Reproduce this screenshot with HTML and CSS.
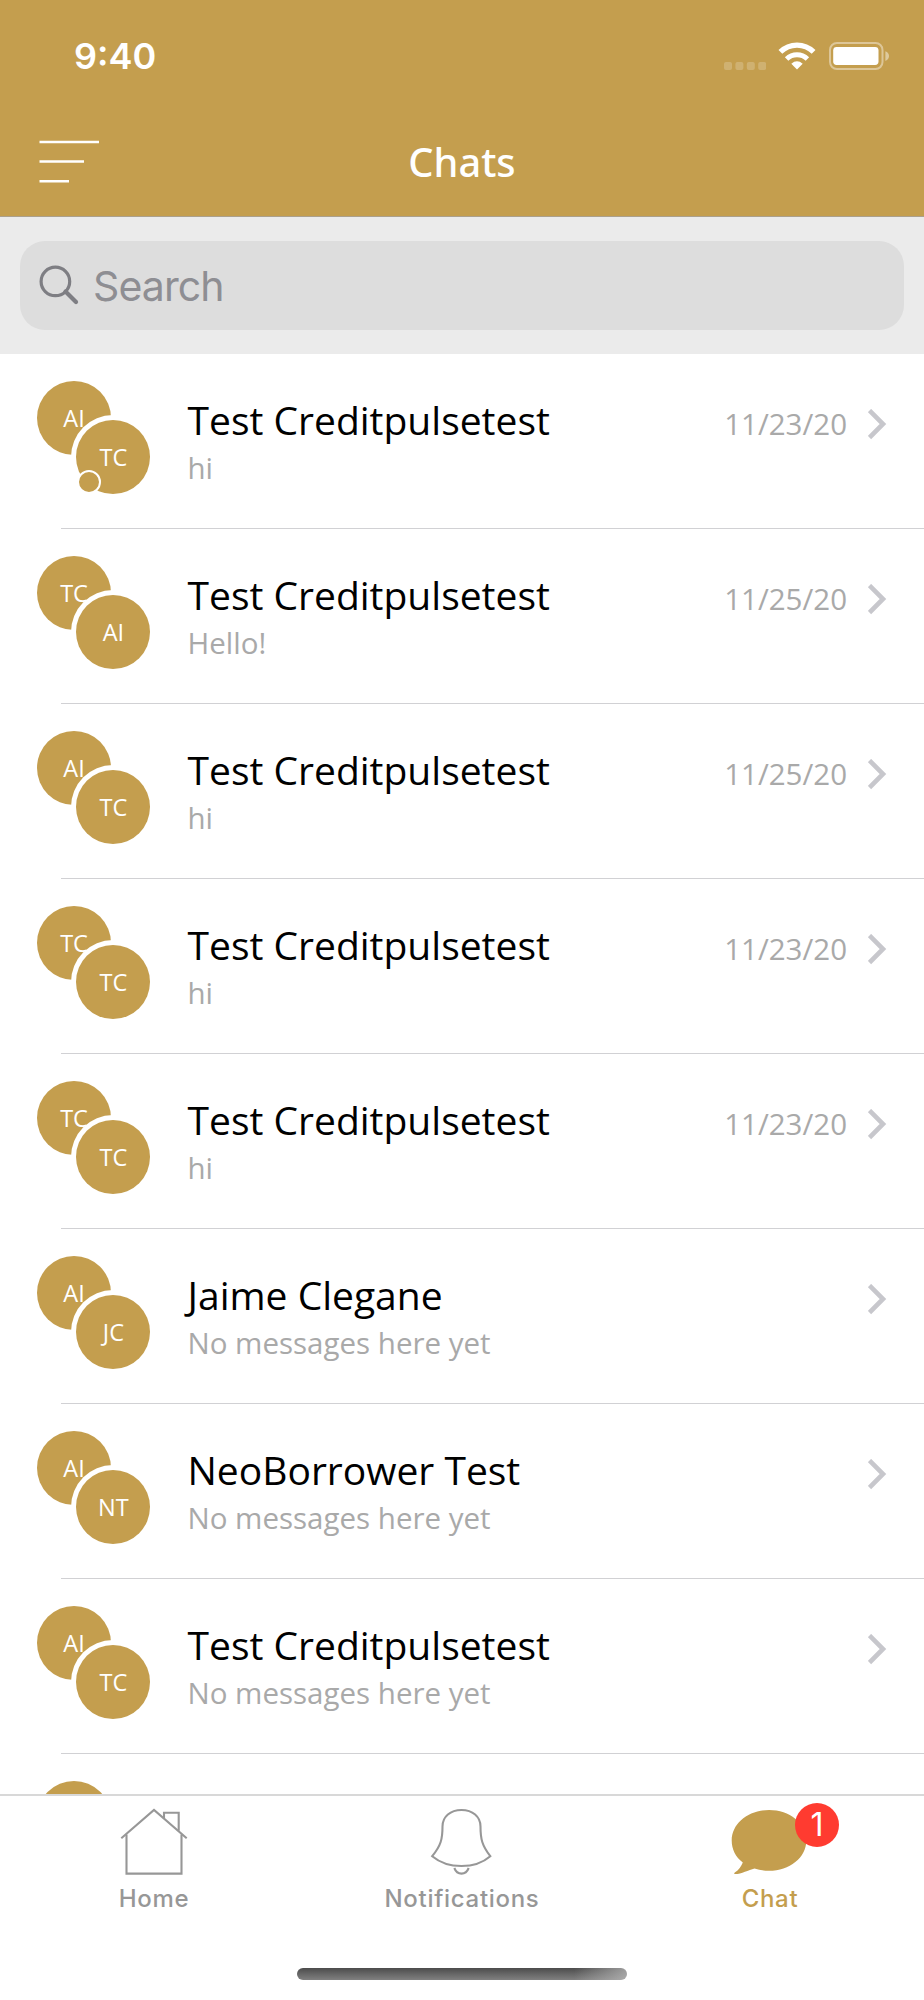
FILE: index.html
```html
<!DOCTYPE html>
<html lang="en">
<head>
<meta charset="utf-8">
<title>Chats</title>
<link rel="stylesheet" href="styles.css">
</head>
<body>
<div class="app">
  <header class="header">
    <div class="status-bar">
      <span class="time">9:40</span>
      <div class="status-icons">
        <svg class="signal" width="42" height="8" viewBox="0 0 42 8"><g fill="#fff" fill-opacity=".2"><rect x="0" width="8" height="8" rx="2"/><rect x="11.4" width="8" height="8" rx="2"/><rect x="22.8" width="8" height="8" rx="2"/><rect x="34.2" width="8" height="8" rx="2"/></g></svg>
        <svg class="wifi" width="38" height="28" viewBox="0 0 38 28"><g fill="none" stroke="#fff" stroke-width="5.4"><path d="M2.4 9.9A23.7 23.7 0 0 1 35.6 9.9"/><path d="M8.6 17A15 15 0 0 1 29.4 17" stroke-width="5"/></g><path d="M19 27.4L13.3 21.7Q19 16.9 24.7 21.7Z" fill="#fff"/></svg>
        <svg class="battery" width="61" height="28" viewBox="0 0 61 28"><rect x="1" y="1" width="52.5" height="26" rx="7" fill="none" stroke="#fff" stroke-opacity=".42" stroke-width="2"/><rect x="4.2" y="5" width="45.3" height="18" rx="3.4" fill="#fff"/><path d="M56.4 9.2q3.6 1.4 3.6 4.9t-3.6 4.9z" fill="#fff" fill-opacity=".45"/></svg>
      </div>
    </div>
    <div class="nav-bar">
      <svg class="menu" width="60" height="44" viewBox="0 0 60 44"><path d="M.5 2H60M.5 21.600H45M.5 41.300H30" stroke="#fff" stroke-width="2.5"/></svg>
      <h1 class="title">Chats</h1>
    </div>
  </header>
  <div class="search-bar">
    <div class="search-field">
      <svg class="search-icon" width="40" height="40" viewBox="0 0 40 40" fill="none" stroke="#7e7e83" stroke-width="3.2"><circle cx="16.4" cy="16.4" r="14.3"/><path d="M26.5 26.5L37 37" stroke-width="4.2" stroke-linecap="round"/></svg>
      <span class="placeholder">Search</span>
    </div>
  </div>
  <main class="chat-list" id="chat-list"></main>
  <footer class="tab-bar">
    <nav class="tabs">
      <div class="tab">
        <svg class="tab-icon" width="68" height="68" viewBox="0 0 68 68" fill="none" stroke="#979797" stroke-width="2.1"><path d="M1.3 30.3L34 2L66.7 30.3"/><path d="M6.5 26.5V65.6H61.5V26.5"/><path d="M44 10.2V4.8H58.7V22.7"/></svg>
        <span class="tab-label">Home</span>
      </div>
      <div class="tab">
        <svg class="tab-icon" width="68" height="68" viewBox="0 0 68 68" fill="none" stroke="#979797" stroke-width="2.1"><path d="M33.500 2C22.500 2 14.500 8.500 14.500 18.500C14.500 31 13 37.500 4.200 48.200Q16 58 33.500 58T62.300 48.200C54 37.500 52.500 31 52.500 18.500C52.500 8.500 44.500 2 33.500 2Z"/><path d="M26.300 60Q28.500 65.600 33.500 65.600T40.700 60"/></svg>
        <span class="tab-label">Notifications</span>
      </div>
      <div class="tab tab-active">
        <svg class="tab-icon chat-icon" width="76" height="68" viewBox="0 0 76 68" fill="#c49e4e"><path d="M38 2C58.500 2 75.300 15.300 75.300 32.500C75.300 49.700 58.500 62.800 38 62.800Q30.500 62.800 23.500 60.400C17.500 62.100 10.500 65.800 4 66.100C3 66 3 65.300 3.800 64.600C7.800 62.100 10.300 58.300 11.800 54.600C4.500 48.800 .700 41.300 .700 32.500C.700 15.300 17.500 2 38 2Z"/></svg>
        <span class="badge">1</span>
        <span class="tab-label">Chat</span>
      </div>
    </nav>
    <div class="home-indicator"></div>
  </footer>
</div>
<script src="script.js"></script>
</body>
</html>
```
FILE: styles.css
```css
* { box-sizing: border-box; }
body { margin: 0; background: #fff; font-family: "Open Sans", sans-serif; }
.app { width: 924px; height: 2000px; display: flex; flex-direction: column; overflow: hidden; background: #fff; }

.header { flex: none; height: 217px; background: #c49e4e; border-bottom: 1px solid #aba08c; color: #fff; }
.status-bar { height: 112px; padding: 0 34px 0 74px; display: flex; justify-content: space-between; align-items: center; }
.time { font: 600 36px/44px Inter, sans-serif; }
.status-icons { display: flex; align-items: center; }
.signal { margin: 19px 12px 0 0; }
.wifi { margin-right: 13px; }
.nav-bar { height: 104px; padding: 0 39px; display: grid; grid-template-columns: 60px 1fr 60px; align-items: center; }
.menu { margin-top: -5px; }
.title { margin: -5px 0 0; text-align: center; font: 500 39.7px/54px "Noto Sans", "Open Sans", sans-serif; }

.search-bar { flex: none; height: 137px; padding: 24px 20px; background: #ebebeb; }
.search-field { height: 89px; border-radius: 25px; background: #ddd; display: flex; align-items: center; gap: 14px; padding: 0 19px; }
.search-icon { margin-top: -1px; }
.placeholder { font: 400 41px/50px Inter, sans-serif; color: #8e8e93; letter-spacing: -0.9px; }

.chat-list { flex: 1; min-height: 0; overflow: hidden; }
.chat-row { height: 175px; padding: 27px 37px 0; display: grid; grid-template-columns: 150.5px 1fr auto 19px; align-items: start; background: linear-gradient(#d1d1d4, #d1d1d4) 61px 100% / 100% 1px no-repeat; }
.avatars { position: relative; height: 114px; }
.avatar { position: absolute; width: 74px; height: 74px; border-radius: 50%; background: #c49e4e; color: #fff; font-size: 23.5px; line-height: 74px; text-align: center; }
.avatar-back { left: 0; top: 0; }
.avatar-front { left: 39.4px; top: 39.4px; box-shadow: 0 0 0 5px #fff; }
.presence { position: absolute; left: 39.5px; top: 89px; width: 24px; height: 24px; border: 2.5px solid #fff; border-radius: 50%; background: #c49e4e; }
.summary { padding-top: 12px; }
.name { margin-bottom: 1px; font-size: 39px; line-height: 54px; color: #000; white-space: nowrap; }
.preview { font-size: 29.5px; line-height: 40px; color: #a9a9a9; white-space: nowrap; }
.date { padding: 23px 21px 0 0; font-size: 29.5px; line-height: 40px; color: #a9a9a9; }
.chevron { margin-top: 28px; }

.tab-bar { flex: none; height: 206px; border-top: 2px solid #d8d8d8; background: #fff; }
.tabs { height: 169px; display: grid; grid-template-columns: repeat(3, 1fr); }
.tab { position: relative; display: flex; flex-direction: column; align-items: center; padding-top: 12px; color: #979797; }
.tab-icon { display: block; }
.chat-icon { margin-right: 3px; }
.tab-label { margin-top: 8px; font: 500 24px/30px Inter, sans-serif; letter-spacing: 0.7px; }
.tab-active { color: #c49e4e; }
.badge { position: absolute; left: 179px; top: 7px; width: 44px; height: 44px; border-radius: 50%; background: #ff3b30; color: #fff; font: 400 32px/44px Inter, sans-serif; text-align: center; }
.home-indicator { width: 330px; height: 12px; margin: 3px auto 0; border-radius: 6px; background: linear-gradient(to right, transparent 84%, rgba(190,190,190,.7)), linear-gradient(#4c4c4c, #808080); }
```
FILE: script.js
```javascript
const chats = [
  ["AI", "TC", "Test Creditpulsetest", "hi", "11/23/20", true],
  ["TC", "AI", "Test Creditpulsetest", "Hello!", "11/25/20"],
  ["AI", "TC", "Test Creditpulsetest", "hi", "11/25/20"],
  ["TC", "TC", "Test Creditpulsetest", "hi", "11/23/20"],
  ["TC", "TC", "Test Creditpulsetest", "hi", "11/23/20"],
  ["AI", "JC", "Jaime Clegane", "No messages here yet", ""],
  ["AI", "NT", "NeoBorrower Test", "No messages here yet", ""],
  ["AI", "TC", "Test Creditpulsetest", "No messages here yet", ""]
];

const row = ([back, front, name, preview, date, presence]) => `
  <article class="chat-row">
    <div class="avatars">
      <div class="avatar avatar-back">${back}</div>
      <div class="avatar avatar-front">${front}</div>
      ${presence ? '<div class="presence"></div>' : ""}
    </div>
    <div class="summary">
      <div class="name">${name}</div>
      <div class="preview">${preview}</div>
    </div>
    <div class="date">${date}</div>
    <svg class="chevron" width="19" height="31" viewBox="0 0 19 31"><path d="M1.500 1.500L15 15L1.500 28.500" fill="none" stroke="#c7c7cc" stroke-width="4.600"/></svg>
  </article>`;

const partialRow = `
  <article class="chat-row">
    <div class="avatars"><div class="avatar avatar-back"></div></div>
  </article>`;

document.getElementById("chat-list").innerHTML = chats.map(row).join("") + partialRow;
```
